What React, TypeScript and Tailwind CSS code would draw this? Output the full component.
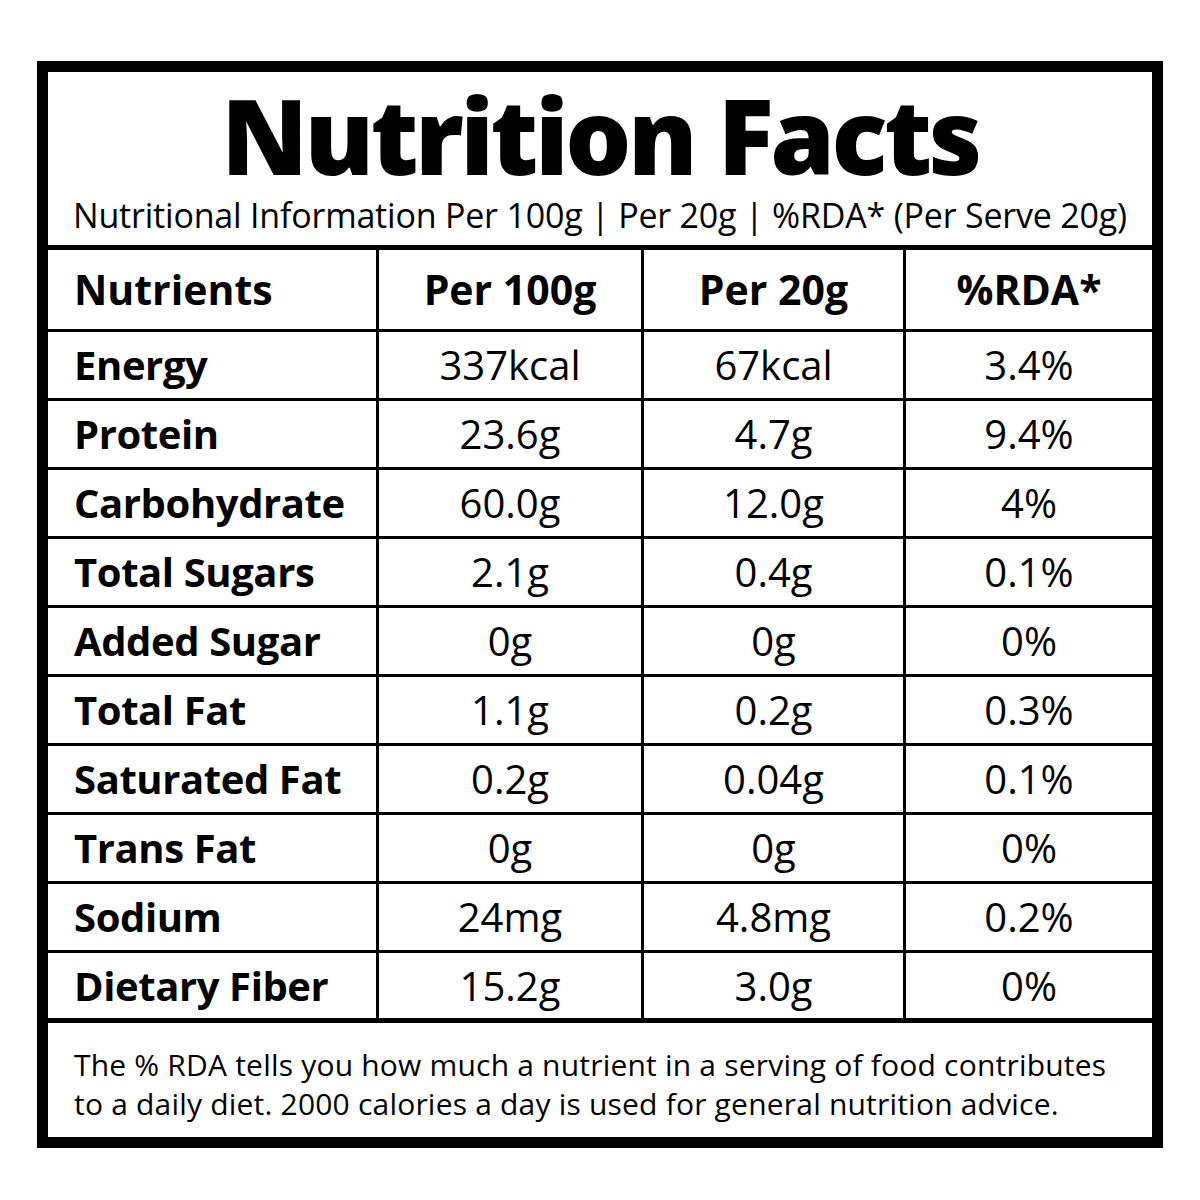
const rows = [
  ["Energy", "337kcal", "67kcal", "3.4%"],
  ["Protein", "23.6g", "4.7g", "9.4%"],
  ["Carbohydrate", "60.0g", "12.0g", "4%"],
  ["Total Sugars", "2.1g", "0.4g", "0.1%"],
  ["Added Sugar", "0g", "0g", "0%"],
  ["Total Fat", "1.1g", "0.2g", "0.3%"],
  ["Saturated Fat", "0.2g", "0.04g", "0.1%"],
  ["Trans Fat", "0g", "0g", "0%"],
  ["Sodium", "24mg", "4.8mg", "0.2%"],
  ["Dietary Fiber", "15.2g", "3.0g", "0%"],
];

const cols = "grid grid-cols-[331px_265px_262px_246px]";

export default function App() {
  return (
    <div className="w-[1200px] h-[1200px] bg-white pt-[61px] pl-[37px] text-black font-['Open_Sans',sans-serif] [font-variant-ligatures:none]">
      <div className="w-[1126px] h-[1087px] border-[11px] border-black flex flex-col">
        {/* title block */}
        <div className="h-[178px] flex flex-col items-center border-b-[5px] border-black">
          <h1 className="mt-[11px] text-[104px] leading-[104px] font-extrabold tracking-[-3.5px]">
            Nutrition Facts
          </h1>
          <p className="mt-[7px] text-[34px] leading-[42px] tracking-[-0.2px]">
            Nutritional Information Per 100g | Per 20g | %RDA* (Per Serve 20g)
          </p>
        </div>

        {/* header row */}
        <div className={`${cols} h-[82px] border-b-[3px] border-black text-[41px] font-bold`}>
          <div className="flex items-center pl-[26px] border-r-[3px] border-black">Nutrients</div>
          <div className="flex items-center justify-center border-r-[3px] border-black">Per 100g</div>
          <div className="flex items-center justify-center border-r-[3px] border-black">Per 20g</div>
          <div className="flex items-center justify-center">%RDA*</div>
        </div>

        {/* data rows */}
        {rows.map((r, i) => (
          <div
            key={r[0]}
            className={`${cols} text-[40px] ${
              i === rows.length - 1
                ? "h-[70px] border-b-[5px]"
                : "h-[69px] border-b-[3px]"
            } border-black`}
          >
            <div className="flex items-center pl-[26px] font-bold tracking-[-0.4px] border-r-[3px] border-black">
              {r[0]}
            </div>
            <div className="flex items-center justify-center border-r-[3px] border-black">{r[1]}</div>
            <div className="flex items-center justify-center border-r-[3px] border-black">{r[2]}</div>
            <div className="flex items-center justify-center">{r[3]}</div>
          </div>
        ))}

        {/* footnote */}
        <div className="flex-1 pl-[26px] pt-[22px] text-[30px] leading-[39px] tracking-[0.2px]">
          <p>The % RDA tells you how much a nutrient in a serving of food contributes</p>
          <p>to a daily diet. 2000 calories a day is used for general nutrition advice.</p>
        </div>
      </div>
    </div>
  );
}
